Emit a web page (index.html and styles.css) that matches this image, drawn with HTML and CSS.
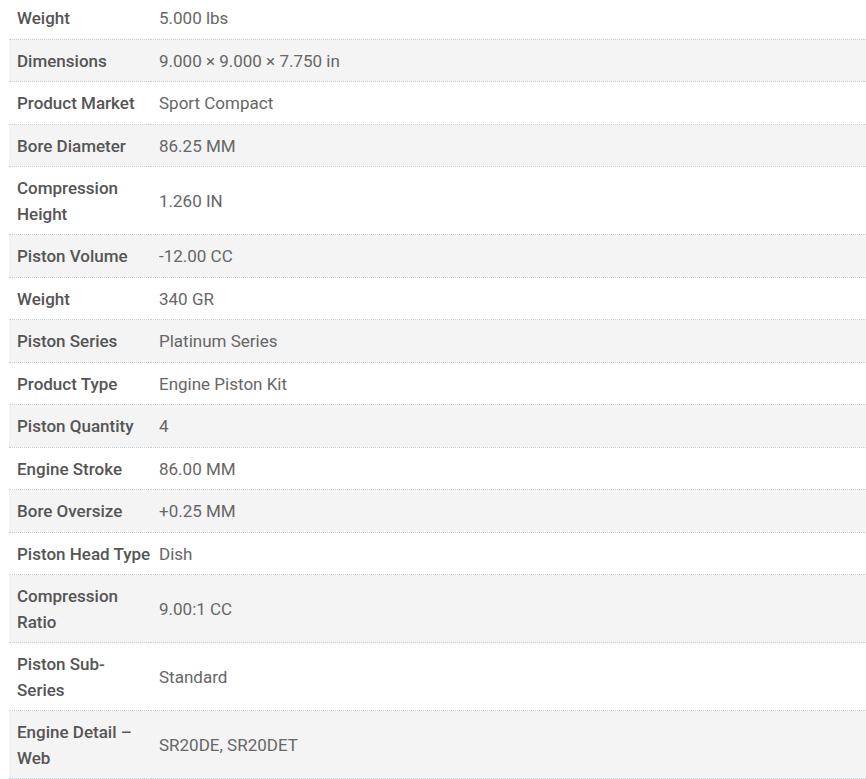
FILE: index.html
```html
<!DOCTYPE html>
<html>
<head>
<meta charset="utf-8">
<link rel="stylesheet" href="styles.css">
</head>
<body>
<div class="wrap">
<table class="attrs">
<tbody>
<tr><th>Weight</th><td>5.000 lbs</td></tr>
<tr><th>Dimensions</th><td>9.000 × 9.000 × 7.750 in</td></tr>
<tr><th>Product Market</th><td>Sport Compact</td></tr>
<tr><th>Bore Diameter</th><td>86.25 MM</td></tr>
<tr><th>Compression Height</th><td>1.260 IN</td></tr>
<tr><th>Piston Volume</th><td>-12.00 CC</td></tr>
<tr><th>Weight</th><td>340 GR</td></tr>
<tr><th>Piston Series</th><td>Platinum Series</td></tr>
<tr><th>Product Type</th><td>Engine Piston Kit</td></tr>
<tr><th>Piston Quantity</th><td>4</td></tr>
<tr><th>Engine Stroke</th><td>86.00 MM</td></tr>
<tr><th>Bore Oversize</th><td>+0.25 MM</td></tr>
<tr><th>Piston Head Type</th><td>Dish</td></tr>
<tr><th>Compression Ratio</th><td>9.00:1 CC</td></tr>
<tr><th>Piston Sub-Series</th><td>Standard</td></tr>
<tr><th>Engine Detail – Web</th><td>SR20DE, SR20DET</td></tr>
</tbody>
</table>
</div>
</body>
</html>
```

FILE: styles.css
```css
html, body {
  margin: 0;
  padding: 0;
  background: #fff;
  overflow: hidden;
}
.wrap {
  padding-left: 9px;
  margin-top: -2.6px;
}
.attrs {
  width: 100%;
  border-collapse: collapse;
  border-spacing: 0;
  table-layout: fixed;
  font-family: Roboto, "Liberation Sans", sans-serif;
  font-size: 17px;
  line-height: 25.5px;
}
.attrs tr {
  border-bottom: 1px dotted #c3cedb;
}
.attrs tr:nth-child(even) {
  background: #f4f4f4;
}
.attrs th {
  width: 134px;
  padding: 9px 0 7px 8px;
  text-align: left;
  vertical-align: middle;
  font-weight: 500;
  color: #555;
}
.attrs td {
  padding: 9px 8px 7px 8px;
  vertical-align: middle;
  color: #666;
}
```
